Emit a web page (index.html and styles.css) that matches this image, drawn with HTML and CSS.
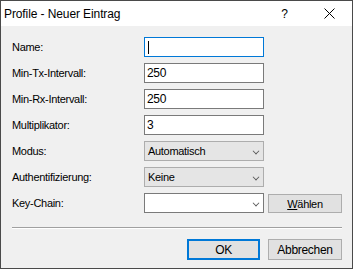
FILE: index.html
```html
<!doctype html>
<html>
<head>
    <meta charset="utf-8" />
    <title>Profile - Neuer Eintrag</title>
    <link rel="stylesheet" href="styles.css">
</head>
<body>
<div class="window">
    <div class="titlebar">
        <span class="title">Profile - Neuer Eintrag</span>
        <span class="tbtn help">?</span>
        <span class="tbtn close">
            <svg width="11" height="11" viewBox="0 0 11 11"><path d="M0.5 0.5L10.5 10.5M10.5 0.5L0.5 10.5" stroke="#000" stroke-width="1" fill="none"/></svg>
        </span>
    </div>
    <div class="content">
        <div class="form">
            <label>Name:</label>
            <div class="edit focus"><span class="caret"></span></div>
            <div></div>

            <label>Min-Tx-Intervall:</label>
            <div class="edit">250</div>
            <div></div>

            <label>Min-Rx-Intervall:</label>
            <div class="edit">250</div>
            <div></div>

            <label>Multiplikator:</label>
            <div class="edit">3</div>
            <div></div>

            <label>Modus:</label>
            <div class="combo">Automatisch<span class="arrow"></span></div>
            <div></div>

            <label>Authentifizierung:</label>
            <div class="combo">Keine<span class="arrow"></span></div>
            <div></div>

            <label>Key-Chain:</label>
            <div class="combo open"><span class="arrow"></span></div>
            <button class="btn pick"><u>W</u>ählen</button>
        </div>
        <div class="sep"></div>
        <div class="buttons">
            <button class="btn default">OK</button>
            <button class="btn">Abbrechen</button>
        </div>
    </div>
</div>
</body>
</html>
```

FILE: styles.css
```css
*{
    margin:0px;
    padding:0px;
    box-sizing:border-box;
}
html,body{
    width:353px;
    height:269px;
    overflow:hidden;
    font-family:"Liberation Sans", Arial, sans-serif;
    font-size:11px;
    color:#000;
}
.window{
    width:353px;
    height:269px;
    border:1px solid #4a4a4a;
    display:flex;
    flex-direction:column;
    background-color:#f0f0f0;
}
.titlebar{
    height:25px;
    background-color:#fff;
    display:flex;
    align-items:center;
    padding-left:3px;
}
.title{
    flex:1;
    font-size:12px;
    letter-spacing:-0.1px;
}
.tbtn{
    width:46px;
    height:25px;
    display:flex;
    align-items:center;
    justify-content:center;
}
.help{
    font-size:12px;
    padding-left:3px;
}
.content{
    flex:1;
    padding:11px 10px 0px 11px;
}
.form{
    display:grid;
    grid-template-columns:132px 120px 1fr;
    grid-auto-rows:20px;
    row-gap:6px;
}
.form label{
    display:flex;
    align-items:center;
    letter-spacing:-0.3px;
}
.edit{
    border:1px solid #7a7a7a;
    background-color:#fff;
    display:flex;
    align-items:center;
    padding-left:2px;
    font-size:12px;
    letter-spacing:-0.3px;
}
.edit.focus{
    border-color:#0078d7;
}
.caret{
    width:1px;
    height:13px;
    background-color:#000;
    margin-left:1px;
}
.combo{
    position:relative;
    border:1px solid #adadad;
    background-color:#e5e5e5;
    display:flex;
    align-items:center;
    padding-left:3px;
    letter-spacing:-0.3px;
}
.combo.open{
    border-color:#7a7a7a;
    background-color:#fff;
}
.arrow{
    position:absolute;
    right:4px;
    top:6px;
    width:6px;
    height:6px;
    border-right:1px solid #555;
    border-bottom:1px solid #555;
    transform:rotate(45deg) scale(0.8);
}
.btn{
    font-family:"Liberation Sans", Arial, sans-serif;
    font-size:11px;
    letter-spacing:-0.3px;
    color:#000;
    background-color:#e1e1e1;
    border:1px solid #adadad;
}
.btn u{
    text-decoration:underline;
}
.pick{
    width:74px;
    height:19px;
    margin-top:1px;
    margin-left:4px;
}
.sep{
    margin-top:14px;
    border-top:1px solid #a0a0a0;
    border-bottom:1px solid #fff;
}
.buttons{
    display:flex;
    justify-content:flex-end;
    gap:8px;
    margin-top:10px;
}
.buttons .btn{
    width:74px;
    height:21px;
    font-size:12px;
}
.buttons .default{
    width:73px;
    border:2px solid #0078d7;
}
```
